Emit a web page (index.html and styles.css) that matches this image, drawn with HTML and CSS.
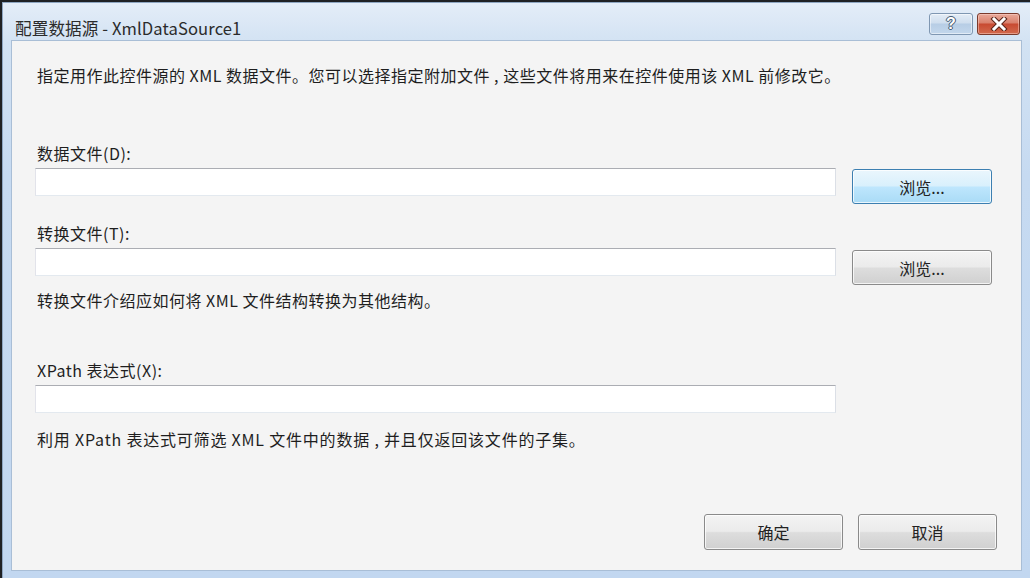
FILE: index.html
```html
<!DOCTYPE html>
<html lang="zh-CN">
<head>
<meta charset="utf-8">
<title>配置数据源 - XmlDataSource1</title>
<link rel="stylesheet" href="styles.css">
</head>
<body>
<div class="window">
  <div class="titlebar">
    <div class="title">配置数据源 - XmlDataSource1</div>
    <div class="caption-buttons">
      <div class="cap-btn help"><span>?</span></div>
      <div class="cap-btn close">
        <svg width="18" height="14" viewBox="0 0 18 14">
          <path d="M4 2 L14 12 M14 2 L4 12" stroke="#5a2418" stroke-width="5" stroke-linecap="square" fill="none"/>
          <path d="M4 2 L14 12 M14 2 L4 12" stroke="#ffffff" stroke-width="3" stroke-linecap="square" fill="none"/>
        </svg>
      </div>
    </div>
  </div>
  <div class="content">
    <p class="text desc">指定用作此控件源的 XML 数据文件。您可以选择指定附加文件 , 这些文件将用来在控件使用该 XML 前修改它。</p>

    <p class="text label label-first">数据文件(D):</p>
    <div class="row">
      <div class="input"></div>
      <div class="btn hover row-btn1">浏览...</div>
    </div>

    <p class="text label label-second">转换文件(T):</p>
    <div class="row">
      <div class="input"></div>
      <div class="btn row-btn2">浏览...</div>
    </div>
    <p class="text hint hint-first">转换文件介绍应如何将 XML 文件结构转换为其他结构。</p>

    <p class="text label label-third">XPath 表达式(X):</p>
    <div class="row">
      <div class="input"></div>
    </div>
    <p class="text hint hint-second">利用 XPath 表达式可筛选 XML 文件中的数据 , 并且仅返回该文件的子集。</p>

    <div class="footer">
      <div class="btn footer-btn">确定</div>
      <div class="btn footer-btn">取消</div>
    </div>
  </div>
</div>
</body>
</html>
```

FILE: styles.css
```css
html, body {
  margin: 0;
  padding: 0;
}
body {
  width: 1030px;
  height: 578px;
  background: #1f2124;
  overflow: hidden;
  font-family: "Noto Sans CJK SC", "Noto Sans", sans-serif;
  color: #1e1e1e;
  padding: 2px 0 0 2px;
  box-sizing: border-box;
}
.window {
  width: 1028px;
  height: 576px;
  box-sizing: border-box;
  display: flex;
  flex-direction: column;
  background: linear-gradient(180deg, #e4edf8 0%, #d2e2f3 7%, #c6daf1 30%, #c2d7f0 100%);
  border-left: 1px solid #8ea6c2;
  border-top: 1px solid #8ea6c2;
}
.titlebar {
  height: 37px;
  display: flex;
  justify-content: space-between;
  align-items: flex-start;
  padding-left: 12px;
  padding-right: 10px;
}
.title {
  font-size: 16.6px;
  line-height: 20px;
  margin-top: 15px;
  color: #2b2b2b;
  letter-spacing: 0.1px;
}
.caption-buttons {
  display: flex;
  gap: 4px;
  margin-top: 10px;
}
.cap-btn {
  height: 22px;
  box-sizing: border-box;
  border-radius: 3px;
  display: flex;
  align-items: center;
  justify-content: center;
}
.help {
  width: 44px;
  border: 1px solid #7f97b2;
  background: linear-gradient(180deg, #e3ecf6 0%, #cfdeee 45%, #b7cde5 50%, #c3d7ec 100%);
  box-shadow: inset 0 0 0 1px rgba(255,255,255,0.5);
}
.help span {
  font-family: "Liberation Sans", sans-serif;
  font-weight: bold;
  font-size: 16px;
  color: #ffffff;
  line-height: 16px;
  text-shadow: 0 0 1px #4b5f78, 0 0 1px #4b5f78, 1px 0 0 #4b5f78, -1px 0 0 #4b5f78, 0 1px 0 #4b5f78, 0 -1px 0 #4b5f78;
}
.close {
  width: 43px;
  border: 1px solid #7a3a2c;
  background: linear-gradient(180deg, #e9a99a 0%, #d9806c 45%, #c84a31 50%, #d26a4e 100%);
  box-shadow: inset 0 0 0 1px rgba(255,220,210,0.45);
}
.content {
  flex: 1;
  margin: 0 8px 7px 8px;
  background: #f4f4f4;
  border: 1px solid #a9bed6;
  display: flex;
  flex-direction: column;
  padding-left: 23px;
  padding-right: 24px;
}
.text {
  margin: 0;
  font-size: 16px;
  line-height: 20px;
  padding-left: 2px;
  white-space: nowrap;
  letter-spacing: 0.5px;
}
.desc {
  margin-top: 24px;
}
.label-first { margin-top: 58px; }
.label-second { margin-top: 19px; }
.label-third { margin-top: 50px; }
.hint-first { margin-top: 5px; }
.hint-second { margin-top: 16px; }
.hint-second { letter-spacing: 0.8px; }
.label { margin-bottom: 5px; }
.row {
  display: flex;
  align-items: flex-start;
  gap: 16px;
}
.input {
  width: 801px;
  height: 28px;
  box-sizing: border-box;
  background: #ffffff;
  border-top: 1px solid #abadb3;
  border-left: 1px solid #e2e3ea;
  border-right: 1px solid #dbdfe6;
  border-bottom: 1px solid #e3e9ef;
}
.btn {
  width: 140px;
  height: 35px;
  box-sizing: border-box;
  border: 1px solid #8a8a8a;
  border-radius: 3px;
  background: linear-gradient(180deg, #f3f3f3 0%, #ebebeb 48%, #dddddd 52%, #d0d0d0 100%);
  box-shadow: inset 0 0 0 1px rgba(255,255,255,0.75);
  display: flex;
  align-items: center;
  justify-content: center;
  font-size: 16px;
  color: #222;
}
.btn.hover {
  border-color: #3c7fb1;
  background: linear-gradient(180deg, #eaf6fd 0%, #d9f0fc 48%, #bee6fd 52%, #a9dbf6 100%);
}
.row-btn1 { margin-top: 1px; }
.row-btn2 { margin-top: 2px; }
.footer {
  margin-top: auto;
  margin-bottom: 20px;
  display: flex;
  justify-content: flex-end;
  gap: 15px;
}
.footer-btn {
  width: 139px;
  height: 36px;
}
```
